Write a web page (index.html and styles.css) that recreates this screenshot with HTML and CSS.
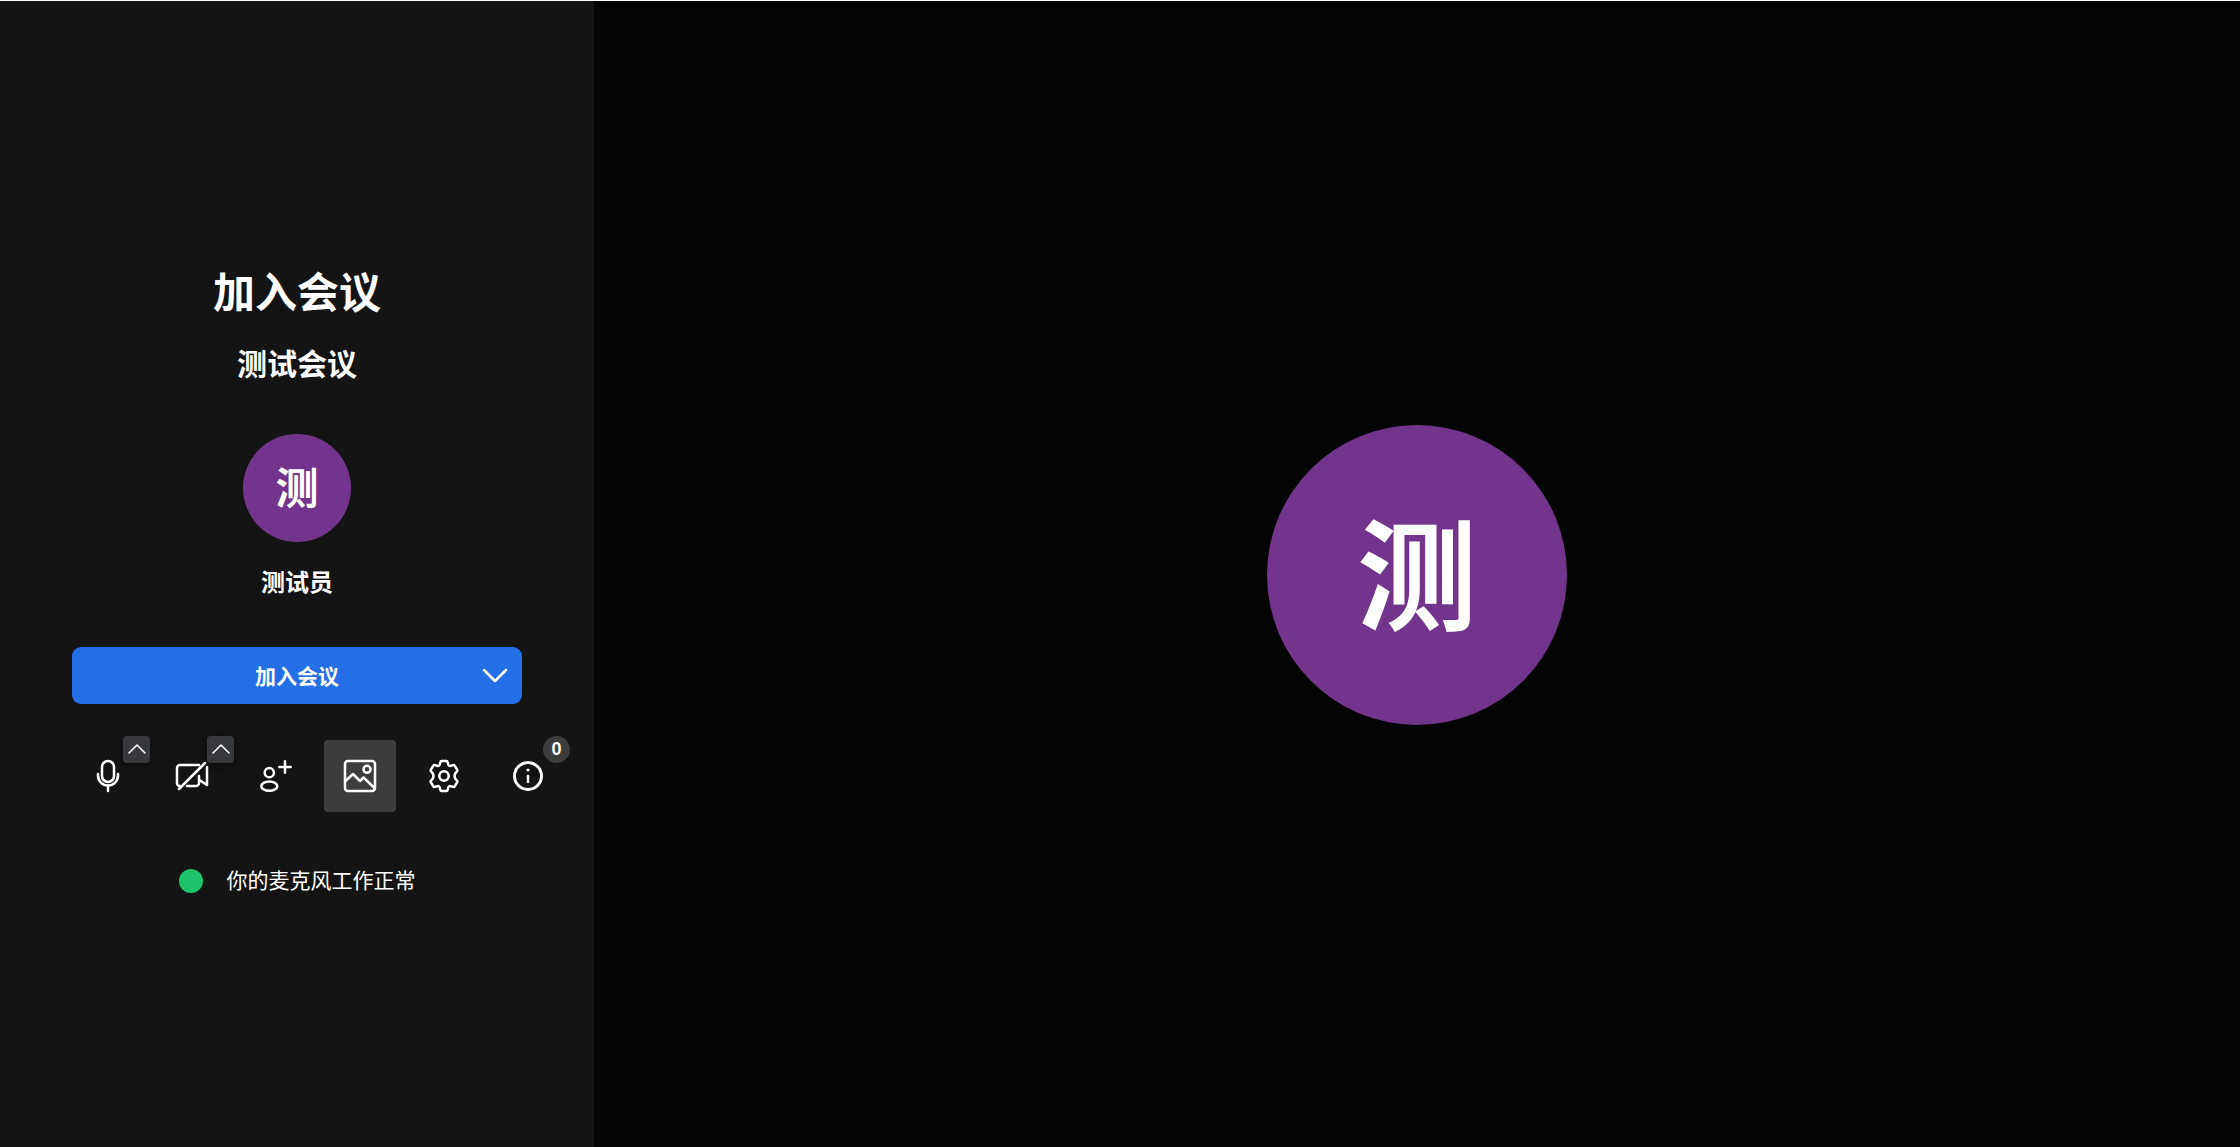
FILE: index.html
```
<!DOCTYPE html>
<html lang="zh-CN">
<head>
  <meta charset="UTF-8" />
  <meta name="viewport" content="width=device-width, initial-scale=1.0" />
  <title>加入会议</title>
  <link rel="stylesheet" href="styles.css">
</head>
<body>
  <div class="prejoin">
    <main class="panel">
      <h1 class="title">加入会议</h1>
      <h2 class="room-name">测试会议</h2>
      <div class="avatar">测</div>
      <div class="user-name">测试员</div>

      <div class="join">
        <button type="button" class="join-btn">加入会议</button>
        <button type="button" class="join-more" aria-label="更多加入选项">
          <svg viewBox="0 0 36 36"><path d="m7 13 11 11 11-11" /></svg>
        </button>
      </div>

      <div class="toolbar">
        <div class="tool">
          <button type="button" class="tool-btn" aria-label="麦克风">
            <svg viewBox="0 0 36 36">
              <rect x="12" y="3" width="12" height="21" rx="6" />
              <path d="M8 16v1.500a10 10 0 0 0 20 0V16M18 28v5" />
            </svg>
          </button>
          <button type="button" class="tool-arrow" aria-label="音频设置">
            <svg viewBox="0 0 27 27"><path d="m6 17 8-8 8 8" /></svg>
          </button>
        </div>
        <div class="tool">
          <button type="button" class="tool-btn" aria-label="摄像头">
            <svg viewBox="0 0 36 36">
              <path d="M25 7H6a3 3 0 0 0-3 3v15a3 3 0 0 0 2.500 3M13 28h9a3 3 0 0 0 3-3v-7M33 9v18l-7.500-5M5 31 31 5" />
            </svg>
          </button>
          <button type="button" class="tool-arrow" aria-label="视频设置">
            <svg viewBox="0 0 27 27"><path d="m6 17 8-8 8 8" /></svg>
          </button>
        </div>
        <div class="tool">
          <button type="button" class="tool-btn" aria-label="邀请">
            <svg viewBox="0 0 36 36">
              <circle cx="11.300" cy="14.700" r="4.600" />
              <ellipse cx="11.300" cy="28.200" rx="8" ry="4.600" />
              <path d="M27 3.300v11.400M21.300 9h11.400" />
            </svg>
          </button>
        </div>
        <div class="tool">
          <button type="button" class="tool-btn selected" aria-label="选择背景">
            <svg viewBox="0 0 36 36">
              <rect x="3" y="3" width="30" height="30" rx="3" />
              <circle cx="25" cy="11.300" r="3.500" />
              <path d="m3.500 23 7.500-7 7 7 3.500-3.500L32.500 30" />
            </svg>
          </button>
        </div>
        <div class="tool">
          <button type="button" class="tool-btn" aria-label="设置">
            <svg viewBox="0 0 36 36">
              <circle cx="18" cy="18" r="4.700" />
              <path d="M15.500 3h5q.9 0 1.100 1l.6 2.300q.7 2.200 2.700 1.500l2.300-.7q1-.3 1.500.5l2.500 4.200q.5.800-.2 1.500L29.500 15q-1.800 3 0 6l1.500 1.700q.7.700.2 1.500l-2.500 4.200q-.5.800-1.500.5l-2.300-.7q-2-.7-2.700 1.500l-.6 2.300q-.2 1-1.100 1h-5q-.9 0-1.100-1l-.6-2.300q-.7-2.200-2.700-1.500l-2.300.7q-1 .3-1.500-.5l-2.500-4.200q-.5-.8.2-1.500L6.500 21q1.800-3 0-6L5 13.300q-.7-.7-.2-1.500l2.500-4.200q.5-.8 1.500-.5l2.300.7q2 .7 2.700-1.500l.6-2.300q.2-1 1.100-1z" />
            </svg>
          </button>
        </div>
        <div class="tool">
          <button type="button" class="tool-btn" aria-label="信息">
            <svg viewBox="0 0 36 36">
              <circle class="thick" cx="18" cy="18" r="13.500" />
              <path d="M18 18v6" />
              <circle class="dot" cx="18" cy="12" r="1.600" />
            </svg>
          </button>
          <span class="badge">0</span>
        </div>
      </div>

      <div class="status">
        <span class="status-dot"></span>
        <span>你的麦克风工作正常</span>
      </div>
    </main>

    <section class="preview">
      <div class="avatar avatar-large">测</div>
    </section>
  </div>
</body>
</html>
```
FILE: styles.css
```
* {
  box-sizing: border-box;
}

body {
  margin: 0;
  background: #040404;
  color: #fff;
  font-family: "Liberation Sans", "Noto Sans CJK SC", sans-serif;
}

button {
  margin: 0;
  padding: 0;
  border: 0;
  background: none;
  color: inherit;
  font: inherit;
  cursor: pointer;
}

svg {
  display: block;
  fill: none;
  stroke: #fff;
  stroke-width: 2.5;
  stroke-linecap: round;
  stroke-linejoin: round;
}

.prejoin {
  display: flex;
  min-height: 100vh;
  border-top: 1px solid #fff;
}

.panel {
  display: flex;
  flex-direction: column;
  align-items: center;
  justify-content: center;
  flex: 0 0 594px;
  min-width: 0;
  padding: 12px 72px 0;
  background: #141414;
}

.title {
  margin: 0 0 21px;
  font-size: 42px;
  line-height: 60px;
}

.room-name {
  margin: 0 0 49px;
  font-size: 30px;
  line-height: 40px;
}

.avatar {
  display: flex;
  align-items: center;
  justify-content: center;
  width: 108px;
  height: 108px;
  padding-bottom: 5px;
  border-radius: 50%;
  background: #73348b;
  font-size: 43px;
  font-weight: bold;
}

.avatar-large {
  width: 300px;
  height: 300px;
  padding-bottom: 12px;
  font-size: 120px;
}

.user-name {
  margin: 25px 0 48px;
  font-size: 24px;
  font-weight: bold;
  line-height: 32px;
}

.join {
  display: flex;
  position: relative;
  width: 100%;
  margin-bottom: 36px;
  border-radius: 9px;
  background: #246fe5;
}

.join-btn {
  flex: 1;
  height: 57px;
  font-size: 21px;
  font-weight: bold;
}

.join-more {
  position: absolute;
  top: 0;
  right: 0;
  height: 100%;
  padding: 0 9px;
}

.join-more svg {
  width: 36px;
  height: 36px;
}

.toolbar {
  display: flex;
  gap: 12px;
  align-self: flex-start;
  margin-bottom: 53px;
}

.tool {
  position: relative;
}

.tool-btn {
  display: flex;
  align-items: center;
  justify-content: center;
  width: 72px;
  height: 72px;
  border-radius: 4px;
}

.tool-btn.selected {
  background: #3d3d3d;
}

.tool-btn svg {
  width: 36px;
  height: 36px;
}

.tool-btn .thick {
  stroke-width: 3;
}

.tool-btn .dot {
  fill: #fff;
  stroke: none;
}

.tool-arrow,
.badge {
  position: absolute;
  top: -4px;
  right: -6px;
  width: 27px;
  height: 27px;
}

.tool-arrow {
  border-radius: 4px;
  background: #36383c;
  box-shadow: 0 3px 8px rgba(0, 0, 0, 0.5);
}

.tool-arrow svg {
  stroke-width: 1.6;
}

.badge {
  border-radius: 50%;
  background: #3d3d3d;
  font-size: 18px;
  font-weight: bold;
  line-height: 27px;
  text-align: center;
}

.status {
  display: flex;
  align-items: center;
  gap: 24px;
  font-size: 21px;
  line-height: 32px;
}

.status-dot {
  width: 24px;
  height: 24px;
  border-radius: 50%;
  background: #1ec26a;
}

.preview {
  display: flex;
  flex: 1;
  align-items: center;
  justify-content: center;
  padding-top: 2px;
}
```
